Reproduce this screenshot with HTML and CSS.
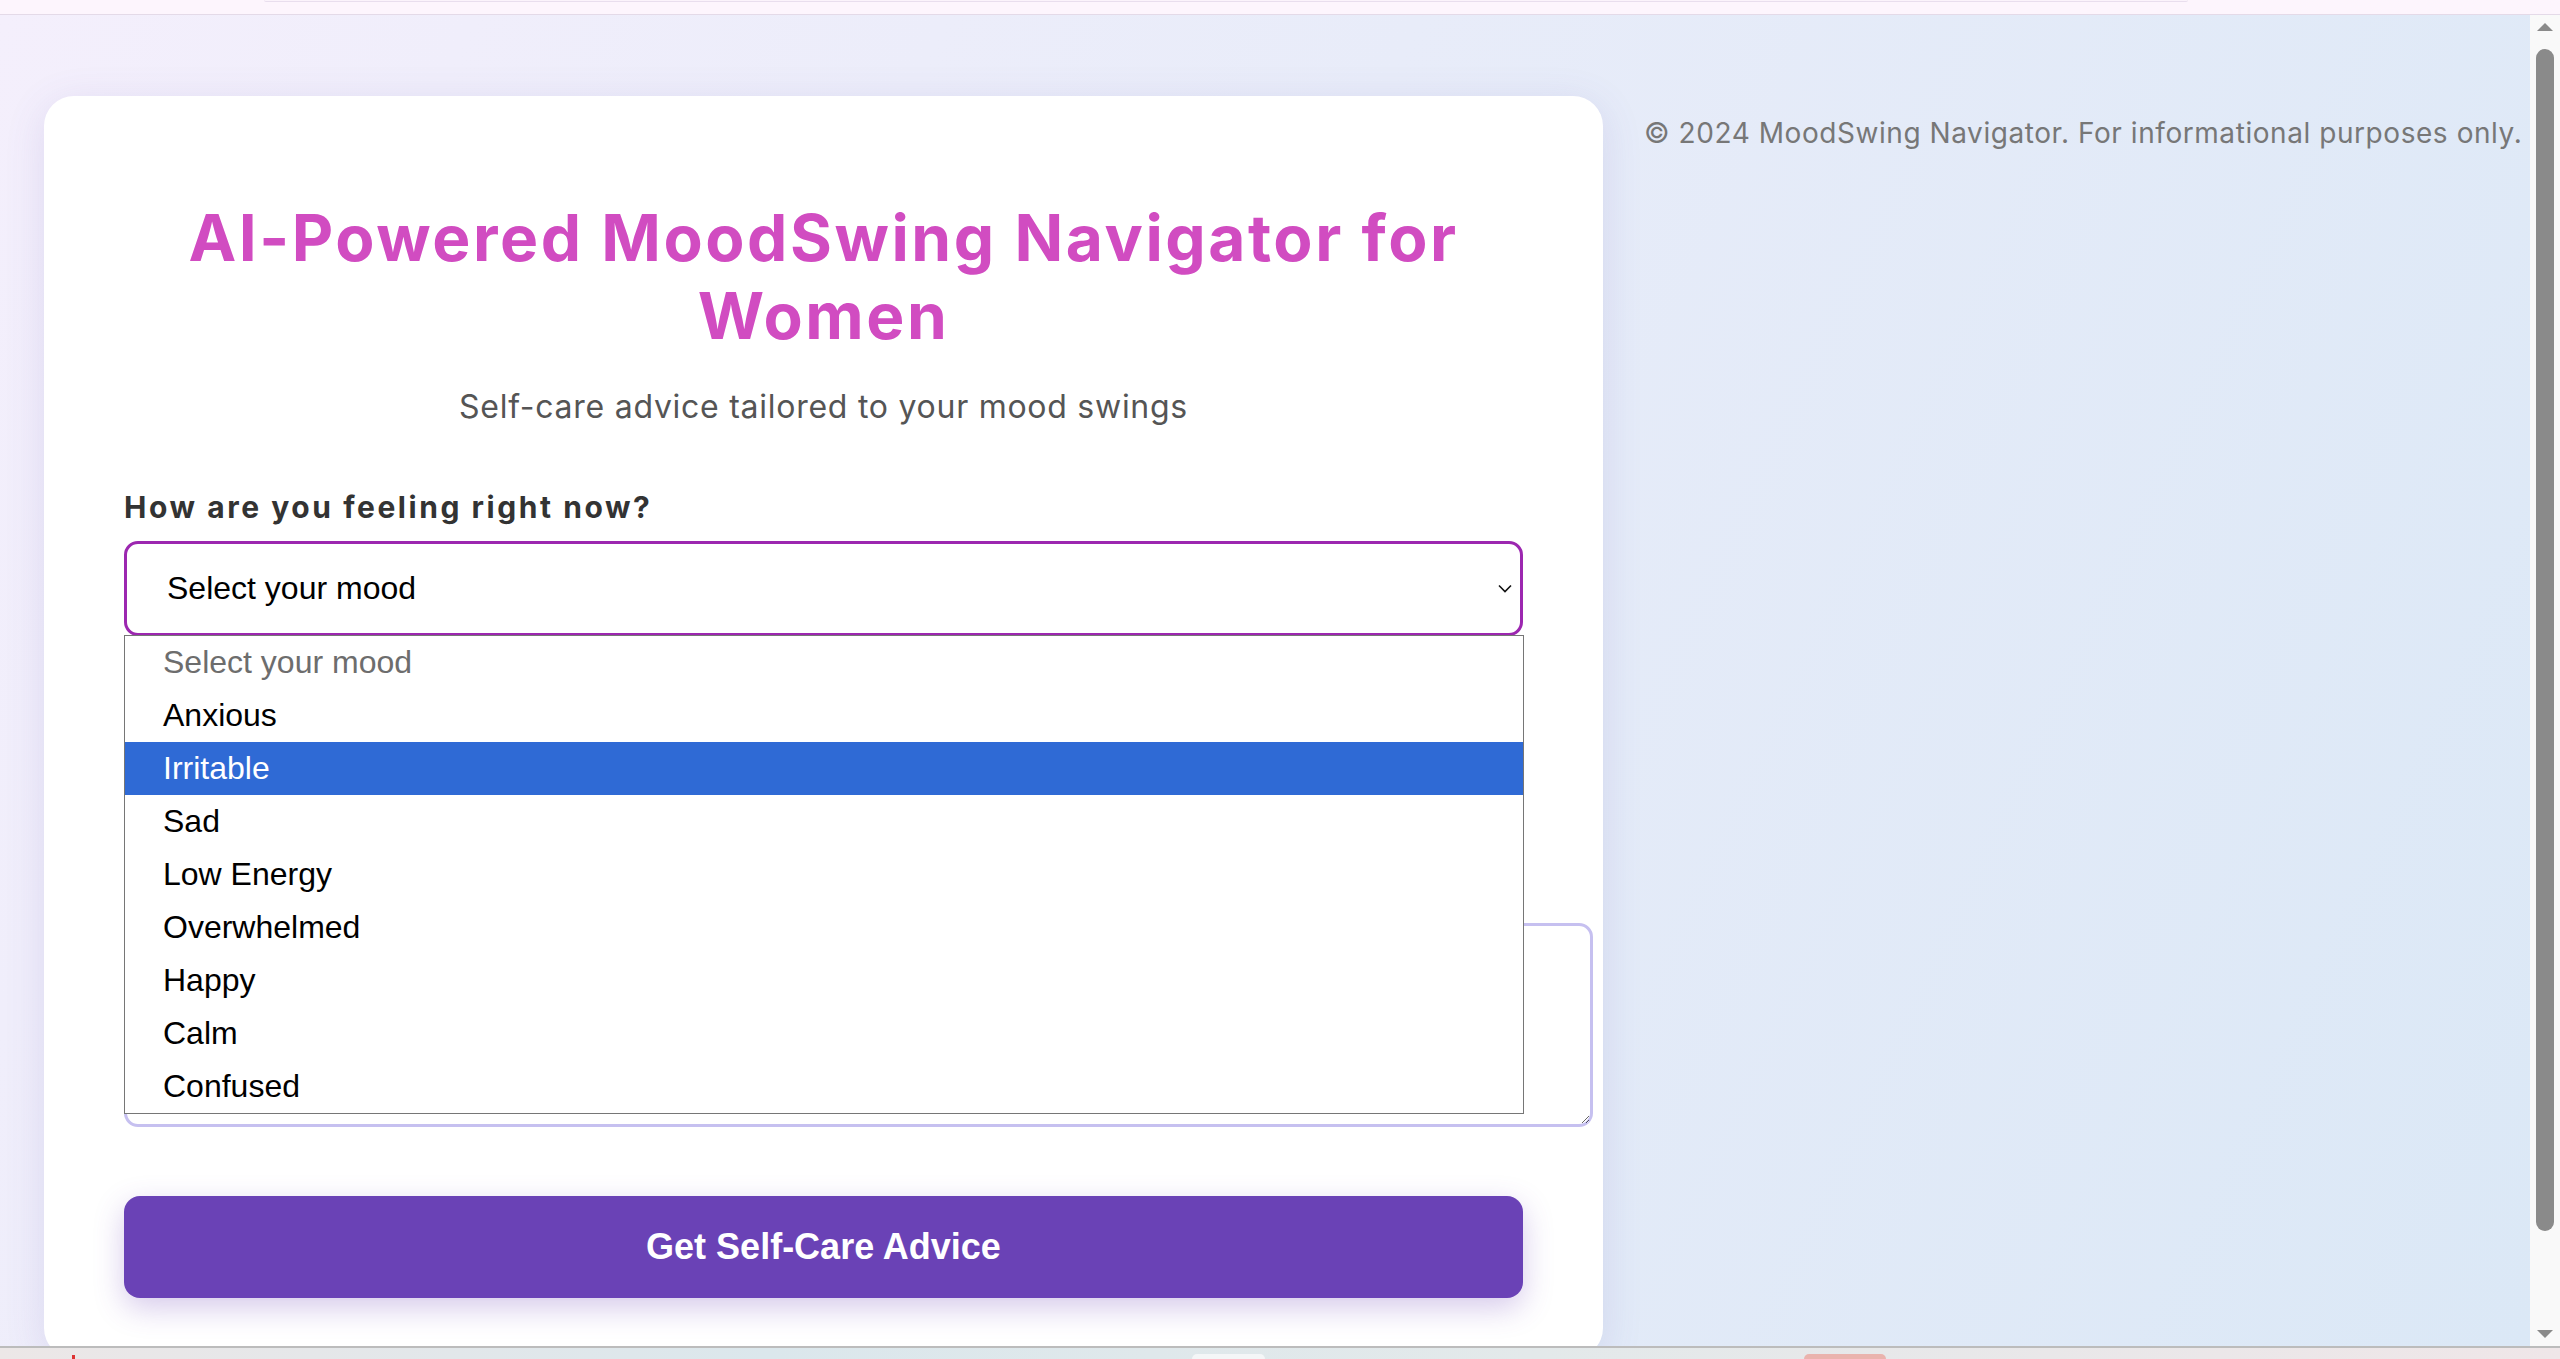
FILE: index.html
```html
<!DOCTYPE html>
<html lang="en">
<head>
<meta charset="utf-8">
<title>AI-Powered MoodSwing Navigator for Women</title>
<link rel="stylesheet" href="styles.css">
</head>
<body>
<div class="screen">
  <div class="topbar"><div class="topbar-tab"></div></div>
  <div class="viewport">
    <div class="page">
      <main class="card">
        <h1 class="title">AI-Powered MoodSwing Navigator for Women</h1>
        <p class="subtitle">Self-care advice tailored to your mood swings</p>
        <div class="field">
          <label class="label">How are you feeling right now?</label>
          <div class="select-wrap">
            <div class="select">
              <span>Select your mood</span>
              <svg class="chevron" width="14" height="9" viewBox="0 0 14 9"><polyline points="1,1.5 7,7.5 13,1.5" fill="none" stroke="#111" stroke-width="1.6"/></svg>
            </div>
            <ul class="popup">
              <li class="opt placeholder">Select your mood</li>
              <li class="opt">Anxious</li>
              <li class="opt active">Irritable</li>
              <li class="opt">Sad</li>
              <li class="opt">Low Energy</li>
              <li class="opt">Overwhelmed</li>
              <li class="opt">Happy</li>
              <li class="opt">Calm</li>
              <li class="opt">Confused</li>
            </ul>
          </div>
        </div>
        <textarea class="notes"></textarea>
        <button class="cta">Get Self-Care Advice</button>
      </main>
      <footer class="footer">© 2024 MoodSwing Navigator. For informational purposes only.</footer>
    </div>
    <div class="scrollbar">
      <div class="sb-arrow up"></div>
      <div class="sb-thumb"></div>
      <div class="sb-arrow down"></div>
    </div>
  </div>
  <div class="taskbar">
    <span class="tb-mark"></span>
    <span class="tb-tab white"></span>
    <span class="tb-tab salmon"></span>
  </div>
</div>
</body>
</html>
```
FILE: styles.css
```css
* { box-sizing: border-box; }
html, body { margin: 0; padding: 0; height: 100%; overflow: hidden; }
body { font-family: "Inter", "Noto Sans", sans-serif; }

.screen { height: 1359px; display: flex; flex-direction: column; }

.topbar {
  height: 15px;
  background: #fdf5fd;
  border-bottom: 1px solid #e4dae8;
  flex: none;
}
.topbar-tab {
  margin-left: 264px;
  width: 1924px;
  height: 2px;
  background: #fbf3fb;
  border-bottom: 1px solid #e9deee;
  border-radius: 0 0 4px 4px;
}

.viewport { flex: 1; display: flex; min-height: 0; }

.page {
  flex: 1;
  display: flex;
  align-items: flex-start;
  gap: 41px;
  padding: 81px 0 0 44px;
  background: linear-gradient(115deg, #f4effc 0%, #e8ecf9 45%, #dbe8f6 100%);
  overflow: hidden;
}

.card {
  flex: none;
  width: 1559px;
  background: #fff;
  border-radius: 30px;
  padding: 103px 80px 60px;
  box-shadow: 0 8px 40px rgba(90, 80, 170, 0.13);
}

.title {
  margin: 0;
  text-align: center;
  font-size: 64px;
  line-height: 78px;
  font-weight: 700;
  letter-spacing: 0.04em;
  color: #d14cc1;
}

.subtitle {
  margin: 32px 0 0;
  text-align: center;
  font-size: 32px;
  font-weight: 400;
  letter-spacing: 0.023em;
  color: #555;
}

.field { margin-top: 63px; }

.label {
  display: block;
  font-size: 30px;
  font-weight: 700;
  letter-spacing: 0.085em;
  color: #333;
  margin-bottom: 16px;
}

.select-wrap { position: relative; }

.select {
  height: 95px;
  border: 3px solid #9c27b0;
  border-radius: 14px;
  display: flex;
  align-items: center;
  justify-content: space-between;
  padding: 0 8px 0 40px;
  font-family: "Liberation Sans", Arial, sans-serif;
  font-size: 32px;
  color: #000;
  background: #fff;
}
.chevron { display: block; }

.popup {
  position: absolute;
  top: calc(100% - 1px);
  left: 0;
  width: calc(100% + 1px);
  margin: 0;
  padding: 0;
  list-style: none;
  background: #fff;
  border: 1px solid #767676;
  z-index: 5;
}
.opt {
  height: 53px;
  line-height: 53px;
  padding-left: 38px;
  font-family: "Liberation Sans", Arial, sans-serif;
  font-size: 32px;
  color: #000;
}
.opt.placeholder { color: #6d6d6d; }
.opt.active { background: #2f6ad5; color: #fff; }

.notes {
  display: block;
  box-sizing: content-box;
  width: 100%;
  height: 134px;
  margin-top: 287px;
  padding: 32px;
  border: 3px solid #c6c0f0;
  border-radius: 14px;
  background: #fff;
  font-family: "Liberation Sans", Arial, sans-serif;
  font-size: 28px;
}

.cta {
  display: block;
  width: 100%;
  height: 102px;
  margin-top: 69px;
  border: none;
  border-radius: 16px;
  background: #6a42b6;
  color: #fff;
  font-family: "Liberation Sans", Arial, sans-serif;
  font-weight: 700;
  font-size: 36px;
  box-shadow: 0 10px 30px rgba(106, 66, 182, 0.28);
}

.footer {
  padding-top: 20px;
  font-size: 28px;
  letter-spacing: 0.02em;
  color: #777;
  white-space: nowrap;
}

.scrollbar {
  flex: none;
  width: 30px;
  background: #f9f9f9;
  display: flex;
  flex-direction: column;
  align-items: center;
  padding: 8px 0;
}
.sb-arrow {
  width: 0; height: 0;
  border-left: 8px solid transparent;
  border-right: 8px solid transparent;
}
.sb-arrow.up { border-bottom: 8px solid #8a8a8a; }
.sb-arrow.down { border-top: 8px solid #8a8a8a; margin-top: auto; }
.sb-thumb {
  width: 18px;
  height: 1182px;
  margin-top: 18px;
  border-radius: 9px;
  background: #8a8a8a;
}

.taskbar {
  flex: none;
  height: 13px;
  border-top: 2px solid #bcbcbc;
  background: linear-gradient(90deg, #ece7e7 0%, #dbe7ec 30%, #e3e9ea 60%, #efe6e8 100%);
  display: flex;
  align-items: flex-end;
}
.tb-mark { width: 3px; height: 4px; background: #d33; margin-left: 72px; }
.tb-tab { height: 5px; border-radius: 5px 5px 0 0; }
.tb-tab.white { width: 73px; margin-left: 1117px; background: #f4f6f7; }
.tb-tab.salmon { width: 82px; margin-left: 539px; background: #eab3ad; }
```
